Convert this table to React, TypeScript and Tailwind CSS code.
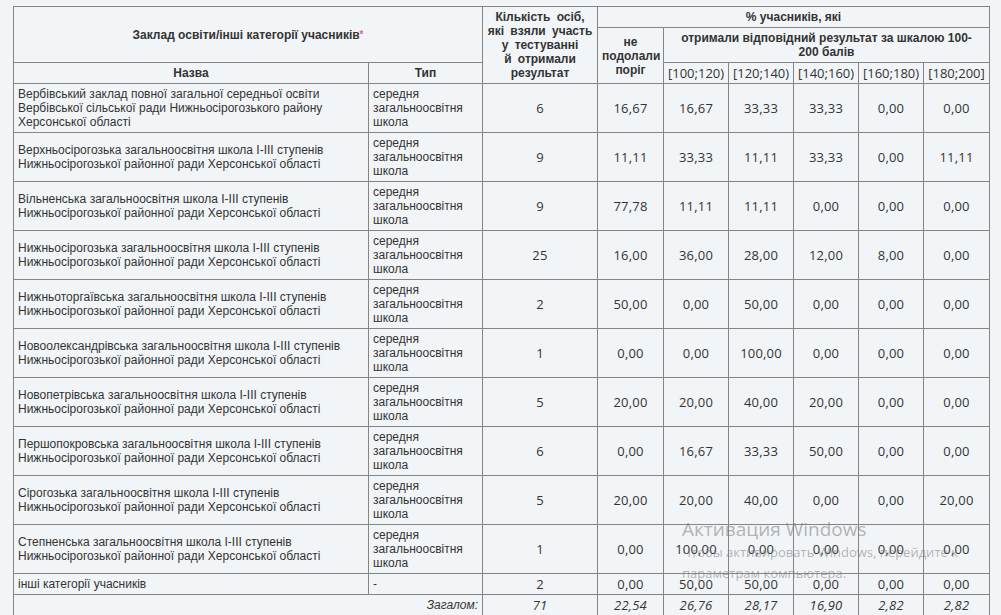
import React from 'react'

type Row = {
    name: string[]
    type: string[]
    count: string
    values: string[]
}

const TYPE = ['середня', 'загальноосвітня', 'школа']
const TAIL = 'Нижньосірогозької районної ради Херсонської області'

const rows: Row[] = [
    {
        name: [
            'Вербівський заклад повної загальної середньої освіти',
            'Вербівської сільської ради Нижньосірогозького району',
            'Херсонської області',
        ],
        type: TYPE,
        count: '6',
        values: ['16,67', '16,67', '33,33', '33,33', '0,00', '0,00'],
    },
    {
        name: ['Верхньосірогозька загальноосвітня школа I-III ступенів', TAIL],
        type: TYPE,
        count: '9',
        values: ['11,11', '33,33', '11,11', '33,33', '0,00', '11,11'],
    },
    {
        name: ['Вільненська загальноосвітня школа I-III ступенів', TAIL],
        type: TYPE,
        count: '9',
        values: ['77,78', '11,11', '11,11', '0,00', '0,00', '0,00'],
    },
    {
        name: ['Нижньосірогозька загальноосвітня школа I-III ступенів', TAIL],
        type: TYPE,
        count: '25',
        values: ['16,00', '36,00', '28,00', '12,00', '8,00', '0,00'],
    },
    {
        name: ['Нижньоторгаївська загальноосвітня школа I-III ступенів', TAIL],
        type: TYPE,
        count: '2',
        values: ['50,00', '0,00', '50,00', '0,00', '0,00', '0,00'],
    },
    {
        name: ['Новоолександрівська загальноосвітня школа I-III ступенів', TAIL],
        type: TYPE,
        count: '1',
        values: ['0,00', '0,00', '100,00', '0,00', '0,00', '0,00'],
    },
    {
        name: ['Новопетрівська загальноосвітня школа I-III ступенів', TAIL],
        type: TYPE,
        count: '5',
        values: ['20,00', '20,00', '40,00', '20,00', '0,00', '0,00'],
    },
    {
        name: ['Першопокровська загальноосвітня школа I-III ступенів', TAIL],
        type: TYPE,
        count: '6',
        values: ['0,00', '16,67', '33,33', '50,00', '0,00', '0,00'],
    },
    {
        name: ['Сірогозька загальноосвітня школа I-III ступенів', TAIL],
        type: TYPE,
        count: '5',
        values: ['20,00', '20,00', '40,00', '0,00', '0,00', '20,00'],
    },
    {
        name: ['Степненська загальноосвітня школа I-III ступенів', TAIL],
        type: TYPE,
        count: '1',
        values: ['0,00', '100,00', '0,00', '0,00', '0,00', '0,00'],
    },
    {
        name: ['інші категорії учасників'],
        type: ['-'],
        count: '2',
        values: ['0,00', '50,00', '50,00', '0,00', '0,00', '0,00'],
    },
]

const totals = ['22,54', '26,76', '28,17', '16,90', '2,82', '2,82']
const ranges = ['[100;120)', '[120;140)', '[140;160)', '[160;180)', '[180;200]']

const cell = 'border border-[#858585] px-[4px] py-[3px] align-middle'
const th = `${cell} font-bold text-center`
const num = `${cell} text-center font-['Open_Sans',sans-serif] text-[13px] tracking-[0.2px]`

function Lines({ lines }: { lines: string[] }) {
    return (
        <>
            {lines.map((l, i) => (
                <React.Fragment key={i}>
                    {i > 0 && <br />}
                    {l}
                </React.Fragment>
            ))}
        </>
    )
}

export default function App() {
    return (
        <div className="relative min-h-[615px] w-[1001px] overflow-hidden bg-[#f2f5f8] pl-[13px] pt-[6px] text-[#333] font-['Liberation_Sans',Arial,sans-serif] text-[12px] leading-[14px]">
            <table className="w-[976px] table-fixed border-collapse">
                <colgroup>
                    <col className="w-[355px]" />
                    <col className="w-[114px]" />
                    <col className="w-[115px]" />
                    <col className="w-[66px]" />
                    <col className="w-[65px]" />
                    <col className="w-[65px]" />
                    <col className="w-[65px]" />
                    <col className="w-[65px]" />
                    <col className="w-[66px]" />
                </colgroup>
                <thead>
                    <tr>
                        <th colSpan={2} rowSpan={2} className={th}>
                            Заклад освіти/інші категорії учасників
                            <span className="text-[10px] text-[#e8637a] align-top">*</span>
                        </th>
                        <th rowSpan={3} className={`${th} [word-spacing:3px]`}>
                            Кількість осіб,
                            <br />
                            які взяли участь
                            <br />
                            у тестуванні
                            <br />
                            й отримали
                            <br />
                            результат
                        </th>
                        <th colSpan={6} className={th}>
                            % учасників, які
                        </th>
                    </tr>
                    <tr>
                        <th rowSpan={2} className={th}>
                            не
                            <br />
                            подолали
                            <br />
                            поріг
                        </th>
                        <th colSpan={5} className={th}>
                            отримали відповідний результат за шкалою 100-
                            <br />
                            200 балів
                        </th>
                    </tr>
                    <tr>
                        <th className={th}>Назва</th>
                        <th className={th}>Тип</th>
                        {ranges.map((r) => (
                            <th key={r} className={`${cell} text-center font-normal font-['Open_Sans',sans-serif] text-[13px]`}>
                                {r}
                            </th>
                        ))}
                    </tr>
                </thead>
                <tbody>
                    {rows.map((row, i) => (
                        <tr key={i}>
                            <td className={cell}>
                                <Lines lines={row.name} />
                            </td>
                            <td className={cell}>
                                <Lines lines={row.type} />
                            </td>
                            <td className={num}>{row.count}</td>
                            {row.values.map((v, j) => (
                                <td key={j} className={num}>
                                    {v}
                                </td>
                            ))}
                        </tr>
                    ))}
                    <tr>
                        <td colSpan={2} className={`${cell} text-right italic`}>
                            Загалом:
                        </td>
                        <td className={`${num} italic`}>71</td>
                        {totals.map((v, j) => (
                            <td key={j} className={`${num} italic`}>
                                {v}
                            </td>
                        ))}
                    </tr>
                </tbody>
            </table>

            {/* Windows activation watermark */}
            <div className="pointer-events-none absolute left-[682px] top-[517px] font-['Open_Sans',sans-serif] text-[rgba(120,120,120,0.55)]">
                <div className="text-[19px] leading-[25px]">Активация Windows</div>
                <div className="text-[13px] leading-[21px]">Чтобы активировать Windows, перейдите к</div>
                <div className="text-[13px] leading-[21px]">параметрам компьютера.</div>
            </div>
        </div>
    )
}
